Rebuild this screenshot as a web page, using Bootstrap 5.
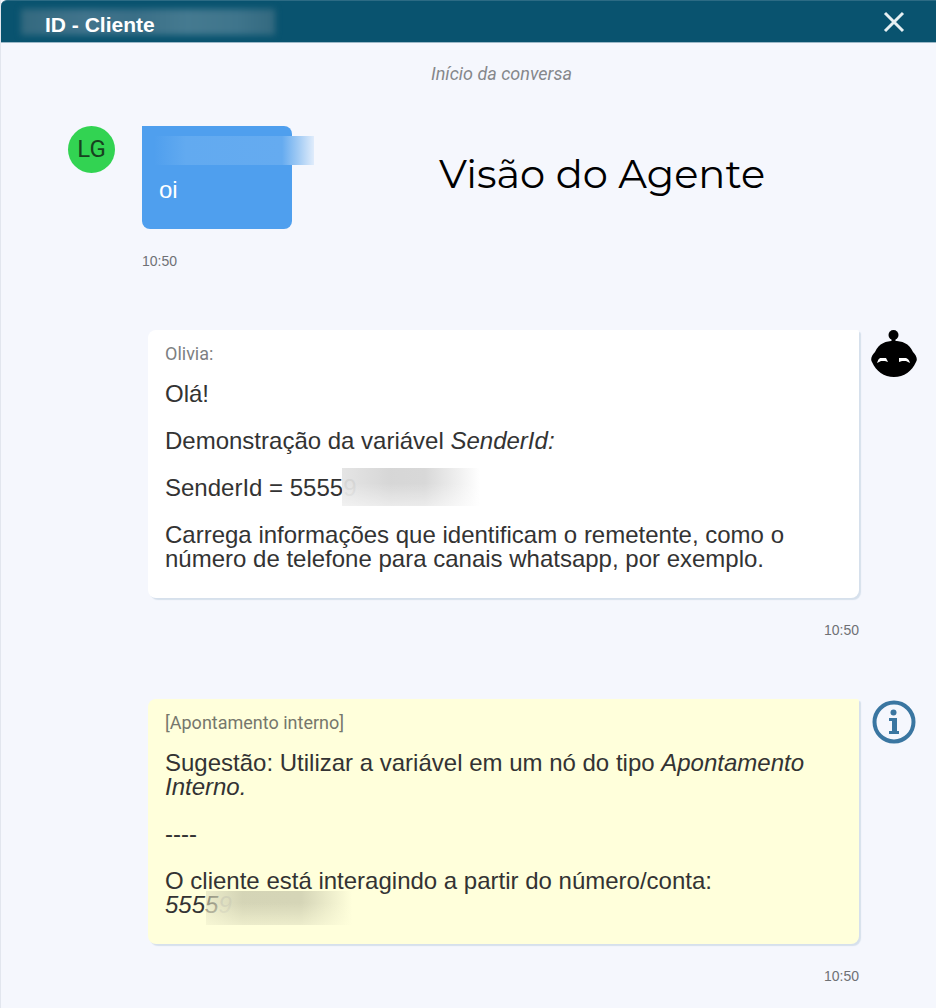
<!DOCTYPE html>
<html lang="pt-BR">
<head>
<meta charset="utf-8">
<meta name="viewport" content="width=device-width, initial-scale=1">
<title>ID - Cliente</title>
<link href="https://cdn.jsdelivr.net/npm/bootstrap@5.3.0/dist/css/bootstrap.min.css" rel="stylesheet">
<style>
  body { background: #f5f7fd; color: #333; font-family: "Liberation Sans", Arial, sans-serif; font-size: 24px; line-height: 24px; }
  .chat { border-left: 1px solid #e2e6ee; }
  .chat-header { background: #09536f; height: 43px; padding: 0 31px 0 16px; border-top: 1px solid #2c6b84; border-bottom: 1px solid #9db9c8; border-top-left-radius: 6px; }
  .chat-id { position: relative; z-index: 0; width: 262px; height: 30px; padding: 5px 0 0 28px; margin: 0; font-size: 21px; line-height: 26px; font-weight: 700; color: #fff; }
  .chat-id::before { content: ""; position: absolute; z-index: -1; inset: 2px 4px; filter: blur(3px); background: linear-gradient(90deg, #33697f, #41748c 25%, #3a6f87 45%, #457a90 65%, #3f758c 85%, #33697f); }
  .close-btn { width: 22px; height: 22px; }
  .started { margin: 19px 0 0 66px; font: italic 18px/24px Roboto, sans-serif; color: #85878b; }
  .msg-in { padding: 40px 19px 0 67px; }
  .msg-out { padding: 61px 19px 0 147px; gap: 12px; }
  .msg-body { margin-left: 27px; }
  .avatar { width: 47px; height: 47px; background: #32d352; color: #17421f; font: 400 24px/46px Roboto, sans-serif; }
  .bubble { padding: 12px 18px 27px 17px; border-radius: 8px; }
  .bubble p { margin: 0 0 23px; }
  .bubble p:last-child { margin-bottom: 0; }
  .bubble-in { width: 150px; background: #4f9fee; color: #fff; border-top-left-radius: 0; }
  .bubble-out { background: #fff; box-shadow: 2px 2px 1px #d6e0ec; border-top-right-radius: 2px; }
  .bubble-note { background: #ffffdb; }
  .sender { height: 24px; margin-bottom: 16px; font: 18px/24px Roboto, sans-serif; color: #7d7f82; }
  .bubble-note .sender { color: #76776c; }
  .stamp { display: block; margin-top: 24px; font: 14px/16px "Liberation Sans", Arial, sans-serif; color: #6f7175; }
  .view-title { margin: 24px 0 0 147px; font: 400 40px/48px Montserrat, Inter, sans-serif; color: #000; white-space: nowrap; }
  .side-icon { width: 46px; height: 48px; flex: none; }
  .hidden-data { position: relative; color: #c4c4c0; }
  .hidden-data::after { content: ""; position: absolute; }
  .hidden-name::after { left: -5px; top: -2px; width: 160px; height: 29px; background: linear-gradient(90deg, #4f9fee, #62aaf0 20%, #65abf0 80%, #a0caf4 90%, #e0ecfb); }
  .hidden-phone::after { left: -1px; top: -6px; width: 138px; height: 38px; background: linear-gradient(#fff0 40%, #ffffff80), linear-gradient(90deg, #dcdcdcc0, #d4d4d4f0 35%, #d8d8d8 60%, #fff); }
  .hidden-account::after { left: -12px; top: 0; width: 146px; height: 34px; background: linear-gradient(#ffffdb00 35%, #ffffdb90), linear-gradient(90deg, #dcdcbd90, #d2d2b4f0 25%, #d5d5b7 65%, #ffffdb); }
</style>
</head>
<body>
<main class="chat min-vh-100">
  <header class="chat-header d-flex align-items-center justify-content-between">
    <h1 class="chat-id">ID - Cliente</h1>
    <button type="button" class="close-btn btn p-0 border-0 d-flex" aria-label="Fechar">
      <svg viewBox="0 0 22 22" width="22" height="22" fill="none" stroke="#e6f0f3" stroke-width="3"><path d="M2 2l18 18M20 2L2 20"/></svg>
    </button>
  </header>

  <p class="started text-center">Início da conversa</p>

  <section class="msg-in d-flex align-items-start">
    <div class="avatar rounded-circle text-center flex-shrink-0">LG</div>
    <div class="msg-body flex-shrink-0">
      <div class="bubble bubble-in">
        <div class="sender hidden-data hidden-name"></div>
        <p>oi</p>
      </div>
      <time class="stamp">10:50</time>
    </div>
    <h2 class="view-title">Visão do Agente</h2>
  </section>

  <section class="msg-out d-flex align-items-start">
    <div class="flex-grow-1">
      <div class="bubble bubble-out">
        <div class="sender">Olivia:</div>
        <p>Olá!</p>
        <p>Demonstração da variável <em>SenderId:</em></p>
        <p>SenderId = 5555<span class="hidden-data hidden-phone">9</span></p>
        <p>Carrega informações que identificam o remetente, como o número de telefone para canais whatsapp, por exemplo.</p>
      </div>
      <time class="stamp text-end">10:50</time>
    </div>
    <svg class="side-icon" viewBox="0 0 46 48" aria-hidden="true">
      <circle cx="22.500" cy="5" r="5"/>
      <path d="M20.500 8h4v5h-4z"/>
      <path d="M23 11C31 11 38 13 42 22C45 25 47 29 45 32C41 41 33 47 23 47S5 41 1 32C-1 29 1 25 4 22C8 13 15 11 23 11Z"/>
      <path d="M6 33Q7 29 9 28H15L17 32L14 31H10ZM28 32L28 28H35Q38 29 39 33L35 31H31Z" fill="#fff"/>
    </svg>
  </section>

  <section class="msg-out d-flex align-items-start">
    <div class="flex-grow-1">
      <div class="bubble bubble-out bubble-note">
        <div class="sender">[Apontamento interno]</div>
        <p>Sugestão: Utilizar a variável em um nó do tipo <em>Apontamento Interno.</em></p>
        <p>----</p>
        <p>O cliente está interagindo a partir do número/conta:<br><em>5555<span class="hidden-data hidden-account">9</span></em></p>
      </div>
      <time class="stamp text-end">10:50</time>
    </div>
    <svg class="side-icon" viewBox="0 0 46 48" aria-hidden="true">
      <circle cx="23" cy="23" r="19.500" fill="none" stroke="#3a76a1" stroke-width="4"/>
      <circle cx="22.500" cy="13.500" r="3" fill="#3a76a1"/>
      <path d="M18 19h8v13H28v3H18v-3h3V22h-3z" fill="#3a76a1"/>
    </svg>
  </section>
</main>
<script src="https://cdn.jsdelivr.net/npm/bootstrap@5.3.0/dist/js/bootstrap.bundle.min.js"></script>
</body>
</html>
